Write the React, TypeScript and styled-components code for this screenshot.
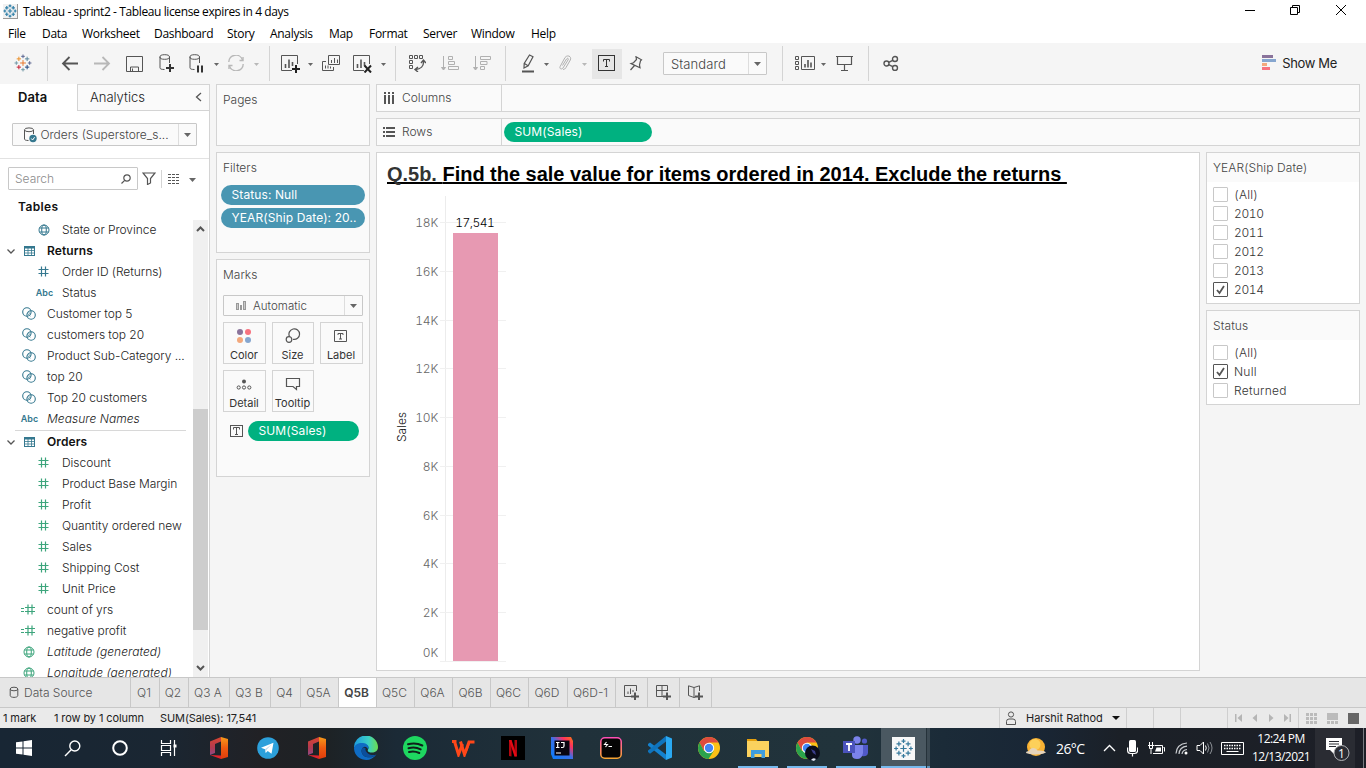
import React from "react";
import styled, { createGlobalStyle } from "styled-components";

const book = `Inter, "Open Sans", sans-serif`;
const segoe = `"Open Sans", "Noto Sans", sans-serif`;
const line = "#d4d4d4";
const ink = "#444";

const GlobalStyle = createGlobalStyle`
  * { box-sizing: border-box; }
  body { margin: 0; overflow: hidden; }
  svg { display: block; flex: none; }
`;

const Screen = styled.div`
  width: 1366px;
  height: 768px;
  display: flex;
  flex-direction: column;
  background: #f5f5f5;
  font: 300 12px ${book};
  color: #222;
  overflow: hidden;
  white-space: nowrap;
`;

/* ---------- window chrome ---------- */
const TitleBar = styled.header`
  height: 24px;
  background: #fff;
  display: flex;
  align-items: center;
  padding: 0 2px 1px 3px;
  font: 12px ${segoe};
  letter-spacing: -0.39px;
  color: #000;
`;
const AppBadge = styled.div`
  width: 15px;
  height: 15px;
  margin: 0 5px 1px 0;
  background: #f1f1f1;
  border-right: 1px solid #999;
  border-bottom: 1px solid #999;
`;
const WindowButtons = styled.div`
  display: flex;
  margin: -3px 0 0 auto;
`;
const WindowButton = styled.div`
  width: 46px;
  display: flex;
  justify-content: center;
  align-items: center;
`;
const MenuBar = styled.nav`
  height: 19px;
  background: #fff;
  display: flex;
  align-items: center;
  padding-left: 8px;
  font: 12px ${segoe};
  color: #000;
`;
const MenuItem = styled.span<{ $w: number }>`
  width: ${(p) => p.$w}px;
  letter-spacing: -0.3px;
`;

/* ---------- toolbar ---------- */
const Toolbar = styled.div`
  height: 41px;
  display: flex;
  align-items: center;
  background: #f5f5f5;
`;
const Slot = styled.div<{ $w: number; $ml?: number; $on?: boolean }>`
  width: ${(p) => p.$w}px;
  height: 30px;
  margin-left: ${(p) => p.$ml ?? 0}px;
  padding: 0 1px 1px 0;
  display: flex;
  flex: none;
  align-items: center;
  justify-content: center;
  background: ${(p) => (p.$on ? "#e6e6e6" : "transparent")};
`;
const CaretSlot = styled(Slot)`
  padding: 2px 0 0;
`;
const ToolSep = styled.div<{ $ml?: number }>`
  width: 1px;
  height: 35px;
  margin-left: ${(p) => p.$ml ?? 0}px;
  background: ${line};
`;
const Combo = styled.div<{ $w: number; $h: number; $ml?: number }>`
  width: ${(p) => p.$w}px;
  height: ${(p) => p.$h}px;
  margin-left: ${(p) => p.$ml ?? 0}px;
  display: flex;
  align-items: stretch;
  border: 1px solid #c8c8c8;
  border-radius: 1px;
  background: #fafafa;
  color: ${ink};
`;
const ComboText = styled.div<{ $pl: number; $ls?: number; $size?: number }>`
  flex: 1;
  display: flex;
  align-items: center;
  padding-left: ${(p) => p.$pl}px;
  letter-spacing: ${(p) => p.$ls ?? 0}px;
  font-size: ${(p) => p.$size ?? 12}px;
`;
const ComboArrow = styled.div`
  width: 18px;
  border-left: 1px solid #ddd;
  display: flex;
  align-items: center;
  justify-content: center;
`;
const ShowMe = styled.div`
  display: flex;
  align-items: center;
  gap: 6px;
  margin: 0 29px 0 auto;
  padding-bottom: 1px;
  font-size: 13px;
  letter-spacing: -0.35px;
  font-weight: 400;
`;

/* ---------- main ---------- */
const Main = styled.main`
  height: 593px;
  display: flex;
`;
const DataPane = styled.aside`
  width: 210px;
  background: #fff;
  border-right: 1px solid ${line};
  display: flex;
  flex-direction: column;
`;
const PaneTabs = styled.div`
  height: 27px;
  display: flex;
  font-size: 13px;
`;
const ActiveTab = styled.div`
  width: 77px;
  padding-left: 18px;
  font-weight: 600;
  color: #111;
  line-height: 26px;
  letter-spacing: 0.1px;
`;
const OtherTab = styled.div`
  flex: 1;
  display: flex;
  align-items: center;
  justify-content: space-between;
  padding: 0 7px 2px 12px;
  background: #fafafa;
  border: solid ${line};
  border-width: 1px 0 1px 1px;
`;
const SourceRow = styled.div`
  height: 48px;
  padding: 12px 0 0 12px;
  border-bottom: 1px solid #e2e2e2;
`;
const SearchRow = styled.div`
  height: 39px;
  display: flex;
  align-items: center;
  padding-left: 8px;
`;
const SearchBox = styled.div`
  width: 130px;
  height: 23px;
  border: 1px solid #c8c8c8;
  border-radius: 1px;
  display: flex;
  align-items: center;
  justify-content: space-between;
  padding: 0 6px;
  color: #8c8c8c;
`;
const TablesTitle = styled.div`
  height: 22px;
  padding: 1px 0 0 18px;
  font-weight: 600;
  color: #111;
  letter-spacing: 0.35px;
`;
const FieldArea = styled.div`
  flex: 1;
  min-height: 0;
  display: flex;
  overflow: hidden;
`;
const FieldList = styled.div`
  width: 193px;
  margin-top: -1px;
`;
const FieldRow = styled.div<{ $kind?: "head" | "gen" }>`
  height: 21px;
  display: flex;
  align-items: center;
  padding-bottom: 1px;
  color: ${(p) => (p.$kind === "head" ? "#111" : "#222")};
  font-weight: ${(p) => (p.$kind === "head" ? 600 : 300)};
  font-style: ${(p) => (p.$kind === "gen" ? "italic" : "normal")};
  letter-spacing: ${(p) => (p.$kind === "head" ? 0.1 : p.$kind === "gen" ? 0.04 : -0.05)}px;
`;
const FieldIcon = styled.div<{ $nested?: boolean }>`
  width: ${(p) => (p.$nested ? 37 : 37)}px;
  margin-left: ${(p) => (p.$nested ? 25 : 10)}px;
  padding-top: 1px;
  display: flex;
  justify-content: center;
`;
const Twisty = styled.div`
  width: 10px;
  margin-left: 6px;
  padding-top: 1px;
`;
const HeadIcon = styled.div`
  width: 31px;
  padding: 1px 0 0 8px;
`;
const Abc = styled.span`
  font: 600 9px ${book};
  letter-spacing: 0;
  padding-left: 2px;
  color: #35788f;
`;
const RowDivider = styled.div`
  height: 2px;
  margin: 0 7px 0 15px;
  border-bottom: 1px solid #d8d8d8;
`;
const ScrollTrack = styled.div`
  width: 15px;
  height: 458px;
  display: flex;
  flex-direction: column;
  align-items: center;
  padding-top: 4px;
  background: #f0f0f0;
`;
const ScrollThumb = styled.div`
  width: 15px;
  height: 221px;
  margin: 176px 0 34px;
  background: #cdcdcd;
`;

const CardColumn = styled.section`
  width: 154px;
  margin-left: 6px;
  display: flex;
  flex-direction: column;
  gap: 6px;
`;
const Card = styled.div<{ $h: number }>`
  height: ${(p) => p.$h}px;
  border: 1px solid ${line};
  background: #fafafa;
  padding: 0 4px;
`;
const CardTitle = styled.div<{ $h: number }>`
  height: ${(p) => p.$h}px;
  padding: 7px 0 0 2px;
  color: ${ink};
  line-height: 15px;
`;
const Pill = styled.div<{ $c: string; $w: number }>`
  width: ${(p) => p.$w}px;
  height: 20px;
  padding-left: 10.5px;
  margin-bottom: 3px;
  border-radius: 10px;
  background: ${(p) => p.$c};
  color: #fff;
  line-height: 20px;
  font-weight: 400;
  letter-spacing: 0.1px;
`;
const MarkGrid = styled.div`
  display: grid;
  grid-template-columns: 43px 42px 43px;
  grid-auto-rows: 42px;
  gap: 6px;
  padding: 6px 0 9px 2px;
`;
const MarkButton = styled.div`
  border: 1px solid ${line};
  display: flex;
  flex-direction: column;
  align-items: center;
  justify-content: space-between;
  padding: 5px 1px 1px 0;
  font-size: 11px;
  font-weight: 400;
  line-height: 14px;
  color: #333;
`;
const MarkPillRow = styled.div`
  display: flex;
  padding-left: 9px;
  gap: 5px;
`;
const MarkPillIcon = styled.div`
  height: 20px;
  display: flex;
  align-items: center;
`;

const Work = styled.section`
  width: 984px;
  margin-left: 6px;
  display: flex;
  flex-direction: column;
  gap: 6px;
`;
const Shelf = styled.div`
  height: 28px;
  display: flex;
  border: 1px solid ${line};
  background: #fafafa;
`;
const ShelfLabel = styled.div`
  width: 125px;
  border-right: 1px solid ${line};
  display: flex;
  align-items: center;
  gap: 7px;
  padding: 0 0 1px 6px;
  color: ${ink};
`;
const ShelfBody = styled.div`
  padding: 3px 2px;
`;
const WorkRow = styled.div`
  display: flex;
  gap: 6px;
`;
const Viz = styled.div`
  width: 824px;
  height: 519px;
  border: 1px solid ${line};
  background: #fff;
`;
const VizTitle = styled.h1`
  height: 42px;
  margin: 0;
  padding: 10px 0 0 10px;
  font: bold 20px "Liberation Sans", Arial, sans-serif;
  color: #000;
  white-space: pre;
  letter-spacing: -0.02px;
  text-decoration: underline;
  text-decoration-thickness: 2px;
  text-underline-offset: 1px;
  text-decoration-skip-ink: none;
`;
const Muted = styled.span`
  color: #333;
`;
const QuickFilters = styled.aside`
  width: 154px;
  display: flex;
  flex-direction: column;
  gap: 6px;
`;
const QuickFilter = styled.div<{ $h: number }>`
  height: ${(p) => p.$h}px;
  border: 1px solid ${line};
  background: #fff;
`;
const FilterHead = styled.div`
  height: 29px;
  margin-bottom: 3px;
  padding-left: 6px;
  line-height: 30px;
  background: #fafafa;
  color: ${ink};
  letter-spacing: 0.1px;
`;
const Check = styled.label<{ $num: boolean }>`
  height: 19px;
  display: flex;
  align-items: center;
  gap: 6px;
  padding-left: 6px;
  color: #333;
  letter-spacing: ${(p) => (p.$num ? -0.35 : 0.25)}px;
  font-feature-settings: "tnum";
`;
const Box = styled.span<{ $on?: boolean }>`
  width: 15px;
  height: 15px;
  border: 1px solid ${(p) => (p.$on ? "#555" : "#c8c8c8")};
  border-radius: 1px;
`;

/* ---------- sheet tabs and status ---------- */
const SheetTabs = styled.div`
  height: 31px;
  display: flex;
  border-top: 1px solid #c8c8c8;
  border-bottom: 1px solid #c8c8c8;
  background: #e6e6e6;
  color: #555;
`;
const SheetTab = styled.div<{ $w: number; $on?: boolean }>`
  width: ${(p) => p.$w}px;
  display: flex;
  align-items: center;
  justify-content: center;
  gap: 5px;
  padding-right: 2px;
  border-right: 1px solid #c8c8c8;
  background: ${(p) => (p.$on ? "#fff" : "transparent")};
  color: ${(p) => (p.$on ? "#444" : "inherit")};
  font-weight: ${(p) => (p.$on ? 600 : 300)};
`;
const SourceTab = styled(SheetTab)`
  justify-content: flex-start;
  padding-left: 9px;
`;
const StatusBar = styled.div`
  height: 20px;
  display: flex;
  align-items: center;
  background: #eaeaea;
  font-size: 11px;
  font-weight: 400;
  color: #222;
`;
const StatusText = styled.span<{ $w: number }>`
  width: ${(p) => p.$w}px;
  padding-left: 3px;
  letter-spacing: -0.1px;
`;
const StatusCell = styled.div<{ $w: number; $gap?: number }>`
  width: ${(p) => p.$w}px;
  height: 20px;
  display: flex;
  align-items: center;
  justify-content: center;
  gap: ${(p) => p.$gap ?? 0}px;
  border-left: 1px solid #cfcfcf;
`;
const UserCell = styled(StatusCell)`
  justify-content: flex-start;
  padding-left: 5px;
  margin-left: auto;
`;

/* ---------- taskbar ---------- */
const Taskbar = styled.footer`
  height: 40px;
  display: flex;
  background: linear-gradient(90deg, #182634 0, #1a2632 12%, #212125 19%, #1d2225 24%, #1b2a36 29%, #20313a 42%, #21333b 62%, #1b2b38 69%, #192635 76%, #1b2027 82%, #1d1f27 100%);
  color: #fff;
  font-family: ${segoe};
  font-weight: 400;
`;
const Task = styled.div<{ $w?: number; $ml?: number; $open?: boolean; $active?: boolean }>`
  width: ${(p) => p.$w ?? 49}px;
  margin-left: ${(p) => p.$ml ?? 0}px;
  height: 40px;
  display: flex;
  flex: none;
  align-items: center;
  justify-content: center;
  background-color: ${(p) => (p.$active ? "#4a5861" : "transparent")};
  box-shadow: ${(p) => (p.$active ? "inset 0 -2px #76b9ed" : "none")};
  background-image: ${(p) => (p.$open ? "linear-gradient(#76b9ed, #76b9ed)" : "none")};
  background-size: 40px 2px;
  background-position: center bottom;
  background-repeat: no-repeat;
`;
const Stack = styled.div`
  width: 4px;
  border-left: 1px solid #25323a;
  background: #3c4a53;
  box-shadow: inset 0 -2px #5e93ba;
`;
const Weather = styled.span`
  width: 44px;
  padding-left: 5px;
  line-height: 41px;
  font-size: 14px;
  letter-spacing: -0.6px;
`;
const Clock = styled.div`
  width: 66px;
  padding-top: 2px;
  padding-right: 2px;
  font-size: 12px;
  line-height: 18px;
  letter-spacing: -0.55px;
  text-align: center;
`;
const Notify = styled.div`
  width: 40px;
  padding-left: 6px;
  display: flex;
  align-items: center;
  justify-content: center;
  background: #2a2c33;
`;
const DesktopEdge = styled.div`
  width: 1px;
  height: 40px;
  margin-left: 8px;
  background: #777b80;
`;

/* ---------- icons ---------- */
type SvgProps = { w: number; h: number; c?: string; sw?: number; children: React.ReactNode };
const Svg = ({ w, h, c = "#555", sw = 1, children }: SvgProps) => (
  <svg width={w} height={h} viewBox={`0 0 ${w} ${h}`} fill="none" stroke={c} strokeWidth={sw}>{children}</svg>
);
const Caret = ({ c = "#666", w = 5 }: { c?: string; w?: number }) => (
  <svg width={w} height={w === 5 ? 3 : 4} viewBox="0 0 8 4.8" preserveAspectRatio="none"><path d="M0 0h8L4 4.8z" fill={c} /></svg>
);

const marks: [number, number, number][] = [
  [10, 10, 3.2], [10, 2.6, 2], [10, 17.4, 2], [2.6, 10, 2], [17.4, 10, 2],
  [5.4, 5.4, 2.4], [14.6, 5.4, 2.4], [5.4, 14.6, 2.4], [14.6, 14.6, 2.4],
];
const colours = ["#e8762c", "#5b6591", "#7199a6", "#7199a6", "#5b6591", "#eb912c", "#5b879b", "#c72035", "#1f457e"];
const TableauMark = ({ size, mono, sw = 1.1 }: { size: number; mono?: string; sw?: number }) => (
  <svg width={size} height={size} viewBox="0 0 20 20" fill="none" strokeWidth={sw}>
    {marks.map(([x, y, r], i) => (
      <path key={i} stroke={mono ?? colours[i]} d={`M${x - r} ${y}h${r * 2}M${x} ${y - r}v${r * 2}`} />
    ))}
  </svg>
);
const Cylinder = ({ kind }: { kind: "plus" | "pause" }) => (
  <Svg w={18} h={20}>
    <path d="M7.500 16.500c-3 0-4.500-.5-4.500-1.700V4M12.500 4v6" />
    <ellipse cx="7.700" cy="4" rx="4.800" ry="2.300" />
    {kind === "plus" ? <path d="M9 15h8M13 11v8" stroke="#333" strokeWidth="2" /> : <path d="M11 12.500v7M15 12.500v7" stroke="#333" strokeWidth="2" />}
  </Svg>
);
const Sheet = ({ kind }: { kind: "plus" | "x" }) => (
  <Svg w={20} h={19}>
    <path d="M17.500 10V1.500h-16v15H12" />
    <path d="M5.500 10v4M9 5.500v8.500M12.500 8v4" strokeWidth="1.600" />
    {kind === "plus" ? <path d="M12 15h8M16 11v8" stroke="#222" strokeWidth="2" /> : <path d="M12.500 11.500l6.500 7M19 11.500l-6.500 7" stroke="#222" strokeWidth="2" />}
  </Svg>
);
const SortIcon = ({ up }: { up?: boolean }) => (
  <Svg w={18} h={16} c="#b0b0b0">
    <path d="M2.500 1v12M.500 12.500l2 2.500 2-2.500z" fill="#b0b0b0" />
    {up ? <path d="M7.500 1.500h4v3h-4zM7.500 6.500h6v3h-6zM7.500 11.500h10v3h-10z" /> : <path d="M7.500 1.500h10v3h-10zM7.500 6.500h6.500v3H7.500zM7.500 11.500h4v3h-4z" />}
  </Svg>
);
const TextIcon = ({ w, h, c = "#555" }: { w: number; h: number; c?: string }) => (
  <Svg w={w} h={h} c={c}>
    <rect x=".5" y=".5" width={w - 1} height={h - 1} />
    <path d={`M${w / 2 - 3} ${h / 2 - 1.500}v-2h6v2M${w / 2} ${h / 2 - 3.500}v7M${w / 2 - 1.500} ${h / 2 + 3.500}h3`} />
  </Svg>
);
const Globe = ({ c }: { c: string }) => (
  <Svg w={12} h={12} c={c}><circle cx="6" cy="6" r="5" /><ellipse cx="6" cy="6" rx="2.300" ry="5" /><path d="M1.500 4h9M1.500 8h9" /></Svg>
);
const Hash = ({ c, calc }: { c: string; calc?: boolean }) =>
  calc ? (
    <Svg w={15} h={11} c={c} sw={1.2}><path d="M0 4.500h3M0 7.500h3M4 3.500h10M4 7.500h10M7 .500v10M11 .500v10" /></Svg>
  ) : (
    <Svg w={11} h={11} c={c} sw={1.2}><path d="M.500 3.500h10M.500 7.500h10M3.500 .500v10M7.500 .500v10" /></Svg>
  );
const SetIcon = () => (
  <Svg w={14} h={13} c="#35788f" sw={1.1}><circle cx="4.900" cy="5" r="4.200" /><circle cx="9.100" cy="8" r="4.200" /><path d="M5.200 6l3.200 3.200M6.200 4.800l2.800 2.800" strokeWidth=".8" /></Svg>
);
const TableIcon = () => (
  <Svg w={11} h={10} c="#35788f"><rect x=".5" y=".5" width="10" height="9" /><path d="M0 1.500h11" strokeWidth="2" /><path d="M0 4.500h11M0 7h11M4 1v9M7.500 1v9" strokeWidth=".8" /></Svg>
);
const Chevron = ({ d, w, h, c = "#555", sw = 1.3 }: { d: string; w: number; h: number; c?: string; sw?: number }) => (
  <Svg w={w} h={h} c={c} sw={sw}><path d={d} /></Svg>
);

/* ---------- data ---------- */
const blue = "#35788f";
const green = "#3da57c";
type Field = [string, string, number?, string?];
const dimensions: Field[] = [
  ["State or Province", "globe", 1], ["Returns", "table"], ["Order ID (Returns)", "hash", 1, blue],
  ["Status", "abc", 1], ["Customer top 5", "set"], ["customers top 20", "set"],
  ["Product Sub-Category ...", "set"], ["top 20", "set"], ["Top 20 customers", "set"], ["Measure Names", "abc"],
];
const measures: Field[] = [
  ["Orders", "table"], ["Discount", "hash", 1], ["Product Base Margin", "hash", 1], ["Profit", "hash", 1],
  ["Quantity ordered new", "hash", 1], ["Sales", "hash", 1], ["Shipping Cost", "hash", 1], ["Unit Price", "hash", 1],
  ["count of yrs", "calc"], ["negative profit", "calc"], ["Latitude (generated)", "globe"], ["Longitude (generated)", "globe"],
];
const FieldItem = ({ f }: { f: Field }) => {
  const [name, icon, nested, c] = f;
  const gen = /generated|Measure/.test(name);
  if (icon === "table")
    return (
      <FieldRow $kind="head">
        <Twisty><Chevron w={10} h={8} d="M1.500 2.500l3.500 3.500L8.500 2.500" /></Twisty>
        <HeadIcon><TableIcon /></HeadIcon>
        {name}
      </FieldRow>
    );
  return (
    <FieldRow $kind={gen ? "gen" : undefined}>
      <FieldIcon $nested={!!nested}>
        {icon === "globe" && <Globe c={nested ? blue : green} />}
        {icon === "hash" && <Hash c={c ?? green} />}
        {icon === "calc" && <Hash c={green} calc />}
        {icon === "set" && <SetIcon />}
        {icon === "abc" && <Abc>Abc</Abc>}
      </FieldIcon>
      {name}
    </FieldRow>
  );
};

const menu: [string, number][] = [
  ["File", 34], ["Data", 40], ["Worksheet", 72], ["Dashboard", 73], ["Story", 43], ["Analysis", 59],
  ["Map", 40], ["Format", 54], ["Server", 48], ["Window", 60], ["Help", 40],
];
const sheets: [string, number][] = [
  ["Q1", 29], ["Q2", 29], ["Q3 A", 41], ["Q3 B", 41], ["Q4", 30], ["Q5A", 38], ["Q5B", 38], ["Q5C", 38],
  ["Q6A", 38], ["Q6B", 38], ["Q6C", 38], ["Q6D", 39], ["Q6D-1", 48],
];

const Filter = ({ title, h, items, on }: { title: string; h: number; items: string[]; on: string }) => (
  <QuickFilter $h={h}>
    <FilterHead>{title}</FilterHead>
    {items.map((i) => (
      <Check key={i} $num={/^\d/.test(i)}>
        <Box $on={i === on}>{i === on && <Svg w={13} h={13} sw={1.8}><path d="M3 7l2.500 3L10 3" /></Svg>}</Box>
        {i}
      </Check>
    ))}
  </QuickFilter>
);

const ChartSvg = styled.svg`
  font: 300 12px ${book};
  font-feature-settings: "tnum";
`;
const ticks = [18, 16, 14, 12, 10, 8, 6, 4, 2, 0];
const Chart = () => (
  <ChartSvg width="140" height="475" viewBox="377 195 140 475">
    <path d="M445.500 196V661" stroke="#ececec" />
    {ticks.map((t) => {
      const y = Math.round(661 - t * 24.38) + 0.5;
      return (
        <g key={t}>
          <path d={`M440 ${y}h66`} stroke="#f0f0f0" />
          <text x="438" y={t ? y + 4.500 : 657} textAnchor="end" fill="#666" letterSpacing="-.2">{t}K</text>
        </g>
      );
    })}
    <rect x="453" y="233" width="45" height="428" fill="#e799b2" />
    <text x="475" y="227" textAnchor="middle" fill="#000" textLength="39.500">17,541</text>
    <text x="0" y="0" transform="translate(406 427) rotate(-90)" textAnchor="middle" fill="#111">Sales</text>
  </ChartSvg>
);

const OfficeIcon = () => (
  <svg width="20" height="24" viewBox="0 0 20 24">
    <defs>
      <linearGradient id="of" x2="0" y2="1"><stop offset="0" stopColor="#d8442f" /><stop offset=".6" stopColor="#b23a52" /><stop offset="1" stopColor="#8e4a86" /></linearGradient>
      <linearGradient id="og" x2="0" y2="1"><stop offset="0" stopColor="#f79a1a" /><stop offset=".5" stopColor="#ee5a10" /><stop offset="1" stopColor="#e03c0c" /></linearGradient>
    </defs>
    <path d="M1 5.500L12 1v4.500L6 8v9l-5 2z" fill="url(#of)" />
    <path d="M12 1l7 2v18l-7 2z" fill="url(#og)" />
    <path d="M1 19l11 .5V23z" fill="#e0232e" />
  </svg>
);
const ChromeIcon = ({ avatar }: { avatar?: boolean }) => (
  <svg width={26} height={26} viewBox="0 0 26 26">
    <circle cx="13" cy="13" r="11" fill="#fbc116" />
    <path d="M3.500 7.500A11 11 0 0 1 22.500 7.500H13L8 16z" fill="#dd4b3e" />
    <path d="M3.500 7.500A11 11 0 0 0 12.500 24L17.800 15.800 8 16z" fill="#2ba24c" />
    <circle cx="13" cy="13" r="5.200" fill="#fff" /><circle cx="13" cy="13" r="4.200" fill="#4285f4" />
    {avatar && <g><circle cx="18.500" cy="18" r="7.500" fill="#0b0d1c" /><path d="M17 14l4 2 1 4-3-2z" fill="#3b3d8a" /><path d="M17 25q2-3 5-1l-2 2z" fill="#dfe6f5" /></g>}
  </svg>
);

export default function App() {
  return (
    <Screen>
      <GlobalStyle />
      <TitleBar>
        <AppBadge><TableauMark size={14} mono="#2f7fa8" sw={1.7} /></AppBadge>
        Tableau - sprint2 - Tableau license expires in 4 days
        <WindowButtons>
          <WindowButton><Svg w={12} h={12} c="#000"><path d="M2 6.500h10" /></Svg></WindowButton>
          <WindowButton><Svg w={12} h={12} c="#000"><path d="M1.500 3.500h7v7h-7zM3.500 3.500v-2h7v7h-2" /></Svg></WindowButton>
          <WindowButton><Svg w={12} h={12} c="#000"><path d="M1 1l10 10M11 1L1 11" /></Svg></WindowButton>
        </WindowButtons>
      </TitleBar>
      <MenuBar>{menu.map(([m, w]) => <MenuItem key={m} $w={w}>{m}</MenuItem>)}</MenuBar>

      <Toolbar>
        <Slot $w={47}><TableauMark size={18} /></Slot>
        <ToolSep />
        <Slot $w={32} $ml={6}><Svg w={18} h={16} sw={1.8}><path d="M17 8.500H2M8.500 2L2 8.500l6.500 6.500" /></Svg></Slot>
        <Slot $w={32}><Svg w={18} h={16} c="#b8b8b8" sw={1.8}><path d="M1 8.500h15M9.500 2L16 8.500l-6.500 6.500" /></Svg></Slot>
        <Slot $w={33}><Svg w={17} h={17}><path d="M.500 1.500h16v15H.500zM4.500 16.500V12h8v4.500M6.500 16v-2.500" /></Svg></Slot>
        <Slot $w={31}><Cylinder kind="plus" /></Slot>
        <Slot $w={28}><Cylinder kind="pause" /></Slot>
        <CaretSlot $w={12}><Caret /></CaretSlot>
        <Slot $w={28}><Svg w={18} h={16} c="#b8b8b8" sw={1.400}><path d="M1.800 7A7 6.800 0 0 1 15.500 5M16.200 9A7 6.800 0 0 1 2.500 11" /><path d="M12.500 5.500h3.500V2M5.500 10.500H2V14" /></Svg></Slot>
        <CaretSlot $w={12}><Caret c="#b8b8b8" /></CaretSlot>
        <ToolSep $ml={7} />
        <Slot $w={30} $ml={5}><Sheet kind="plus" /></Slot>
        <CaretSlot $w={10}><Caret /></CaretSlot>
        <Slot $w={31} $ml={1}><Svg w={18} h={17}><path d="M6.500 .500h11v9h-11zM4 6.500H.500v9h11V12M9.500 8V5M12.500 8V3M15.500 8V4.500M3.500 13.500v-3M6 13.500v-3M8.500 13.500v-2" /></Svg></Slot>
        <Slot $w={31}><Sheet kind="x" /></Slot>
        <CaretSlot $w={10}><Caret /></CaretSlot>
        <ToolSep $ml={7} />
        <Slot $w={32} $ml={5}><Svg w={18} h={18}><path d="M1.500 1.500h3v3h-3zM6.500 1.500h3v3h-3zM11.500 1.500h3v3h-3zM1.500 6.500h3v3h-3zM1.500 11.500h3v3h-3z" /><path d="M15.500 7c.500 5-3 8-8 8.500M13 9l2.500-3L18 9M10 13l-3 2.500 3 2.500" strokeWidth="1.400" /></Svg></Slot>
        <Slot $w={32} $ml={1}><SortIcon up /></Slot>
        <Slot $w={32}><SortIcon /></Slot>
        <ToolSep $ml={7} />
        <Slot $w={28} $ml={8}><Svg w={14} h={19}><path d="M1 17.500h12" strokeWidth="2" /><path d="M8.500 1l3.500 1.800-4.800 9-4.200 2.200.200-4.500zM3.500 9.500l3.500 2.200" strokeWidth="1.200" /></Svg></Slot>
        <CaretSlot $w={8}><Caret /></CaretSlot>
        <Slot $w={31}><Svg w={14} h={16} c="#b0b0b0"><path d="M4.500 10.500l4-6.500c1-1.500 2.500-.500 1.500 1l-5 8c-1.500 2-4 .500-2.800-1.600L7 2.500C9.500-.800 14 1.500 12.300 5L8 12.500q-1 2-3 2" /></Svg></Slot>
        <CaretSlot $w={6}><Caret c="#b8b8b8" /></CaretSlot>
        <Slot $w={30} $ml={5} $on><TextIcon w={17} h={16} c="#333" /></Slot>
        <Slot $w={28}><Svg w={14} h={15} sw={1.200}><path d="M7 .800l5.500 3-1 1-1 4 .500 3L2 7.500l2.500-.800 3-3.200zM5.500 9.500L1.500 14" /></Svg></Slot>
        <Combo $w={104} $h={23} $ml={13}><ComboText $pl={7} $size={13} $ls={0.1}>Standard</ComboText><ComboArrow><Caret w={7} /></ComboArrow></Combo>
        <ToolSep $ml={15} />
        <Slot $w={24} $ml={10}><Svg w={20} h={15}><path d="M.500 .500h3v3h-3zM.500 5.500h3v3h-3zM.500 10.500h3v3h-3zM6.500 .500h13v13h-13z" /><path d="M10 8v3.500M13 4v7.500M16 6.500v5" strokeWidth="1.600" /></Svg></Slot>
        <CaretSlot $w={12}><Caret /></CaretSlot>
        <Slot $w={32}><Svg w={17} h={16}><path d="M0 1.500h17M1.500 1.500v8h14v-8M8.500 9.500v5.500M5 15.500h7" strokeWidth="1.200" /></Svg></Slot>
        <ToolSep $ml={7} />
        <Slot $w={32} $ml={6}><Svg w={16} h={16} sw={1.400}><circle cx="3.500" cy="8.500" r="2.500" /><circle cx="12" cy="4" r="2.500" /><circle cx="12" cy="13" r="2.500" /><path d="M5.700 7.300l4-2M5.700 9.700l4 2" /></Svg></Slot>
        <ShowMe>
          <Svg w={14} h={16} c="none"><path fill="#8a739b" d="M0 0h11v3H0z" /><path fill="#86a6cf" d="M0 4h14v3H0z" /><path fill="#f3a87c" d="M0 8h5v3H0z" /><path fill="#f7727f" d="M0 12h8v3H0z" /></Svg>
          Show Me
        </ShowMe>
      </Toolbar>

      <Main>
        <DataPane>
          <PaneTabs>
            <ActiveTab>Data</ActiveTab>
            <OtherTab>Analytics<Chevron w={7} h={10} d="M6 1L1.500 5 6 9" /></OtherTab>
          </PaneTabs>
          <SourceRow>
            <Combo $w={185} $h={23}>
              <ComboText $pl={10}>
                <Svg w={14} h={16}><path d="M5.500 13.500c-3 0-4-.700-4-1.500V3M10.500 3v4" /><ellipse cx="6" cy="2.800" rx="4.500" ry="1.900" /><circle cx="10" cy="11.500" r="3.700" fill="#35788f" stroke="none" /><path d="M8.300 11.500l1.300 1.500 2-2.800" stroke="#fff" /></Svg>
                &nbsp;Orders (Superstore_s...
              </ComboText>
              <ComboArrow><Caret w={7} /></ComboArrow>
            </Combo>
          </SourceRow>
          <SearchRow>
            <SearchBox>Search<Svg w={10} h={10} sw={1.200}><circle cx="6" cy="4" r="3.200" /><path d="M3.700 6.300L.500 9.500" /></Svg></SearchBox>
            <Slot $w={22}><Svg w={14} h={13} sw={1.200}><path d="M1 1h12L8.500 6.500v4.500l-3 1.500v-6z" /></Svg></Slot>
            <Svg w={24} h={18}><path d="M1.500 0v18" stroke={line} /><path d="M8 4.500h12M8 7.500h12M8 10.500h12M8 13.500h12" strokeDasharray="3 1" /></Svg>
            <CaretSlot $w={17}><Caret w={7} /></CaretSlot>
          </SearchRow>
          <TablesTitle>Tables</TablesTitle>
          <FieldArea>
            <FieldList>
              {dimensions.map((f) => <FieldItem key={f[0]} f={f} />)}
              <RowDivider />
              {measures.map((f) => <FieldItem key={f[0]} f={f} />)}
            </FieldList>
            <ScrollTrack>
              <Chevron w={9} h={9} d="M1 7l3.500-3.500L8 7" sw={2} />
              <ScrollThumb />
              <Chevron w={9} h={9} d="M1 2l3.500 3.500L8 2" sw={2} />
            </ScrollTrack>
          </FieldArea>
        </DataPane>

        <CardColumn>
          <Card $h={62}><CardTitle $h={30}>Pages</CardTitle></Card>
          <Card $h={101}>
            <CardTitle $h={32}>Filters</CardTitle>
            <Pill $c="#4996b2" $w={144}>Status: Null</Pill>
            <Pill $c="#4996b2" $w={144}>YEAR(Ship Date): 20..</Pill>
          </Card>
          <Card $h={218}>
            <CardTitle $h={35}>Marks</CardTitle>
            <Combo $w={140} $h={21} $ml={2}>
              <ComboText $pl={12} $size={11.5} $ls={0.05}>
                <Svg w={17} h={12} c="none"><path fill="#999" d="M0 3h3v7H0zM4 5h2v5H4zM7 1h3v9H7z" /><path fill="#fafafa" d="M1 4h1v5H1zM8 2h1v7H8z" opacity=".5" /></Svg>
                Automatic
              </ComboText>
              <ComboArrow><Caret w={7} /></ComboArrow>
            </Combo>
            <MarkGrid>
              <MarkButton><Svg w={16} h={16} c="none"><circle cx="4" cy="4" r="3" fill="#8a739b" /><circle cx="12" cy="4" r="3" fill="#f7727f" /><circle cx="4" cy="12" r="3" fill="#f3a87c" /><circle cx="12" cy="12" r="3" fill="#86a6cf" /></Svg>Color</MarkButton>
              <MarkButton><Svg w={16} h={16} sw={1.200}><path d="M4.500 8.500A5.300 5.300 0 1 1 8 11.300" /><circle cx="4" cy="11.500" r="2.800" /></Svg>Size</MarkButton>
              <MarkButton><Svg w={14} h={16}><path d="M.500 2.500h12v11H.500zM4 7V5.500h5V7M6.500 5.500v5.500M5 11h3" /></Svg>Label</MarkButton>
              <MarkButton><Svg w={16} h={16}><circle cx="8" cy="5.500" r="2" fill="#555" stroke="none" /><circle cx="2.700" cy="11.500" r="1.600" /><circle cx="8" cy="11.500" r="1.600" /><circle cx="13.300" cy="11.500" r="1.600" /></Svg>Detail</MarkButton>
              <MarkButton><Svg w={16} h={16} sw={1.200}><path d="M1.500 2.500h13v8h-3v3l-3.500-3H1.500z" /></Svg>Tooltip</MarkButton>
            </MarkGrid>
            <MarkPillRow>
              <MarkPillIcon><TextIcon w={13} h={12} /></MarkPillIcon>
              <Pill $c="#00b180" $w={111}>SUM(Sales)</Pill>
            </MarkPillRow>
          </Card>
        </CardColumn>

        <Work>
          <Shelf>
            <ShelfLabel><Svg w={12} h={12} sw={2}><path d="M2 0v2M6 0v2M10 0v2M2 3v9M6 3v9M10 3v9" /></Svg>Columns</ShelfLabel>
            <ShelfBody />
          </Shelf>
          <Shelf>
            <ShelfLabel><Svg w={12} h={12} sw={2}><path d="M0 2h2M0 6h2M0 10h2M3 2h9M3 6h9M3 10h9" /></Svg>Rows</ShelfLabel>
            <ShelfBody><Pill $c="#00b180" $w={148}>SUM(Sales)</Pill></ShelfBody>
          </Shelf>
          <WorkRow>
            <Viz>
              <VizTitle><Muted>Q.5b. </Muted>Find the sale value for items ordered in 2014. Exclude the returns </VizTitle>
              <Chart />
            </Viz>
            <QuickFilters>
              <Filter title="YEAR(Ship Date)" h={152} items={["(All)", "2010", "2011", "2012", "2013", "2014"]} on="2014" />
              <Filter title="Status" h={95} items={["(All)", "Null", "Returned"]} on="Null" />
            </QuickFilters>
          </WorkRow>
        </Work>
      </Main>

      <SheetTabs>
        <SourceTab $w={131}><Svg w={10} h={13}><ellipse cx="5" cy="3" rx="3.800" ry="1.800" /><path d="M1.200 3v6.500c0 2.500 7.600 2.500 7.600 0V3" /></Svg>Data Source</SourceTab>
        {sheets.map(([s, w]) => <SheetTab key={s} $w={w} $on={s === "Q5B"}>{s}</SheetTab>)}
        <SheetTab $w={32}><Svg w={16} h={15}><path d="M13.500 6V.500H1.500v11H8M5 9V6.500M7.500 9V3.500M10 7V5" /><path d="M8 11.500h8M12 7.500v8" strokeWidth="2" /></Svg></SheetTab>
        <SheetTab $w={32}><Svg w={16} h={15}><path d="M12.500 6V.500H1.500v11H8M1.500 5.500h11M7 .500v11" /><path d="M8 11.500h8M12 7.500v8" strokeWidth="2" /></Svg></SheetTab>
        <SheetTab $w={32}><Svg w={16} h={15}><path d="M12.500 6V.800L7 2.500 1.500 .800v9.700L7 12.500V2.500M7 12.500l1.500-.5" /><path d="M8 11.500h8M12 7.500v8" strokeWidth="2" /></Svg></SheetTab>
      </SheetTabs>
      <StatusBar>
        <StatusText $w={51}>1 mark</StatusText>
        <StatusText $w={106}>1 row by 1 column</StatusText>
        <StatusText $w={120}>SUM(Sales): 17,541</StatusText>
        <UserCell $w={127} $gap={9}>
          <Svg w={12} h={15}><circle cx="6" cy="3.500" r="2.600" /><path d="M1.500 13.500v-3q0-2.500 2.500-2.500h4q2.500 0 2.500 2.500v3z" /></Svg>
          Harshit Rathod
          <Caret w={8} c="#111" />
        </UserCell>
        <StatusCell $w={27} /><StatusCell $w={27} /><StatusCell $w={47} />
        <StatusCell $w={71}>
          <Svg w={56} h={8} c="none"><path fill="#b5b5b5" d="M0 0h1.500v8H0zM7 0v8L2.500 4zM22 0v8l-4.500-4zM34 0v8l4.500-4zM49 0v8l4.500-4zM54.500 0H56v8h-1.500z" /></Svg>
        </StatusCell>
        <StatusCell $w={68} $gap={10}>
          <Svg w={11} h={11} c="none"><path fill="#bbb" d="M0 0h3v3H0zM4 0h3v3H4zM8 0h3v3H8zM0 4h3v3H0zM4 4h3v3H4zM8 4h3v3H8zM0 8h3v3H0zM4 8h3v3H4zM8 8h3v3H8z" /></Svg>
          <Svg w={11} h={11} c="none"><path fill="#bbb" d="M0 0h11v7H0zM0 8h3v3H0zM4 8h3v3H4zM8 8h3v3H8z" /></Svg>
          <Svg w={11} h={11} c="none"><path fill="#666" d="M0 0h11v11H0z" /></Svg>
        </StatusCell>
      </StatusBar>

      <Taskbar>
        <Task $w={48}><Svg w={16} h={16} c="none"><path fill="#fff" d="M0 2.300L6.500 1.400v6.100H0zM7.500 1.200L16 0v7.500H7.500zM0 8.500h6.500v6.100L0 13.700zM7.500 8.500H16V16l-8.500-1.200z" /></Svg></Task>
        <Task $w={48}><Svg w={17} h={17} c="#fff" sw={1.400}><circle cx="10.800" cy="6" r="5" /><path d="M7.200 9.800L1 16" /></Svg></Task>
        <Task $w={48}><Svg w={16} h={16} c="#fff" sw={2}><circle cx="8" cy="8" r="6.800" /></Svg></Task>
        <Task $w={48}><Svg w={17} h={16} c="#fff" sw={1.200}><path d="M1.500 0v3.500h9V0M1.500 16v-3.500h9V16M1.500 5.500h9v5h-9zM14.500 0v16" /><path d="M13.500 4.500h3v3h-3z" fill="#fff" stroke="none" /></Svg></Task>
        <Task $ml={2}><OfficeIcon /></Task>
        <Task><Svg w={22} h={22} c="none"><circle cx="11" cy="11" r="10.800" fill="#2ca0db" /><path fill="#fff" d="M4 10.800l12.500-5-2 11-3.800-2.800-2 1.900-.700-3.600z" /><path fill="#b9d9ec" d="M8 12.300L14.500 7.500l-5 5.300-.8 3z" /></Svg></Task>
        <Task><OfficeIcon /></Task>
        <Task>
          <svg width="24" height="24" viewBox="0 0 24 24">
            <defs><linearGradient id="ed" x1="0" x2="1"><stop offset="0" stopColor="#1d9be0" /><stop offset=".6" stopColor="#3bd0c5" /><stop offset="1" stopColor="#6cdc4e" /></linearGradient></defs>
            <path d="M0 12A12 12 0 0 1 24 11c0 4-3 5.500-6 5.500s-5-1-4-3c1.500-2.500-.5-5.500-4.500-5.500C5 8 1 10 0 12z" fill="url(#ed)" />
            <path d="M0 12c1-4 5-5.500 9-5 5 .6 6.500 4 5 6.500-1-3-3.500-3.500-5-2-3 3-1 8.500 3.500 9.500 4 .9 7 0 10-2.500C19 23 14 25 9 23.500 3 22 0 17 0 12z" fill="#0f6cc4" />
            <path d="M9 11.500c-3 3-1 8.500 3.500 9.500 4 .9 7 0 10-2.500-3 1-6 .8-8.500-1-2-1.500-3-3.500-2.500-5.500z" fill="#0b4f9c" />
          </svg>
        </Task>
        <Task><Svg w={24} h={24} c="#10201a" sw={2}><circle cx="12" cy="12" r="12" fill="#1ed760" stroke="none" /><path d="M5 8.300c5-1.500 10-1 14.300 1.200M5.500 12.300c4.500-1.300 8.500-.800 12.200 1.100M6 16c4-1 7-.600 10.300 1" strokeLinecap="round" /></Svg></Task>
        <Task>
          <Svg w={23} h={17} c="#ff4719" sw={3}><path d="M0 1.500h4.500M2.500 1.500L6.500 14.500 10.500 4" /><path d="M8.500 1.500L12.500 14.500 17 2h5.500" /><path d="M17.500 2L13.500 13" strokeWidth="2" /></Svg>
        </Task>
        <Task><Svg w={24} h={24} c="none"><path fill="#000" d="M0 0h24v24H0z" /><path fill="#b1060f" d="M8 4h2.500v16.500L8 20zM13.500 4H16v16l-2.500.5z" /><path fill="#e50914" d="M8 4h2.500L16 20.500h-2.500z" /></Svg></Task>
        <Task>
          <svg width="22" height="22" viewBox="0 0 22 22">
            <defs><linearGradient id="ij" x1="0" x2="1" y1="1" y2="0"><stop offset="0" stopColor="#087cfa" /><stop offset=".5" stopColor="#3a6fe8" /><stop offset=".75" stopColor="#fe315d" /><stop offset="1" stopColor="#f97a12" /></linearGradient></defs>
            <path d="M0 0h20l2 4v18H2l-2-5z" fill="url(#ij)" /><path d="M3.500 3.500h15v15h-15z" fill="#080510" />
            <path d="M5 5.500h3.500M6.700 5.500v5M5 10.500h3.500M10 5.500h3v3.500q0 1.500-1.500 1.500H10M5 16h5" stroke="#fff" strokeWidth="1.200" fill="none" />
          </svg>
        </Task>
        <Task>
          <svg width="22" height="22" viewBox="0 0 22 22">
            <defs><linearGradient id="tm" x2="0" y2="1"><stop offset="0" stopColor="#ff4fb5" /><stop offset="1" stopColor="#f7a532" /></linearGradient></defs>
            <rect x=".8" y=".8" width="20.400" height="20.400" rx="4" fill="#050505" stroke="url(#tm)" strokeWidth="1.600" />
            <path d="M6.500 5L4.500 7.500h3L5.500 10M8.500 9.500h3.500" stroke="#fff" fill="none" strokeWidth="1.100" />
          </svg>
        </Task>
        <Task><Svg w={24} h={24} c="none"><path fill="#1482cf" d="M0 8l2-1.500L18 18.500V24L0 9.500z" /><path fill="#0f74bd" d="M0 16l2 1.800L18 5.500V0L0 14.500z" /><path fill="#2aa9f2" d="M18 0l6 2.500v19L18 24z" /></Svg></Task>
        <Task><ChromeIcon /></Task>
        <Task $open><Svg w={22} h={19} c="none"><path fill="#e5a00d" d="M0 0h9l1.500 2H0z" /><path fill="#fbd25e" d="M0 2h22v16H0z" /><path fill="#3f9ede" d="M4 11h14v8h-3.500v-4h-7v4H4z" /></Svg></Task>
        <Task $open><ChromeIcon avatar /></Task>
        <Task $open>
          <Svg w={26} h={24} c="none"><circle cx="14" cy="4" r="3.700" fill="#7b83eb" /><circle cx="21.500" cy="5" r="2.600" fill="#5059c9" /><path fill="#5059c9" d="M17 9h8v8q-1 4-6 3z" /><path fill="#7b83eb" d="M9 9h11v8q-1 6-6 6t-5-4z" /><path fill="#4b53bc" d="M0 5h12v12H0z" /><path d="M3 8h6M6 8v7" stroke="#fff" strokeWidth="1.800" /></Svg>
        </Task>
        <Task $w={45} $ml={1} $active><Svg w={23} h={23} c="none"><path fill="#f7f7f7" d="M0 0h23v23H0z" /><g transform="translate(1.500 1.500)"><TableauMark size={20} mono="#35789b" sw={1.200} /></g></Svg></Task>
        <Stack />
        <Task $w={30} $ml={91}>
          <Svg w={22} h={20} c="none"><circle cx="11" cy="9" r="9" fill="#f9b233" /><circle cx="10" cy="6.500" r="5.500" fill="#fdd05a" /><path fill="#e4d3bb" d="M1 15q0-2 3-2 1-3 4.500-3 3 0 4 2.500 7-.5 8.500 2-3 2-8 1.700-8 .8-12-1.200z" /></Svg>
        </Task>
        <Weather>26°C</Weather>
        <Task $w={24} $ml={2}><Svg w={13} h={8} c="#fff" sw={1.300}><path d="M1 7l5.500-5.500L12 7" /></Svg></Task>
        <Task $w={22}><Svg w={11} h={17} c="#fff" sw={1.200}><rect x="2" y="0" width="7" height="12" rx="1.500" fill="#fff" stroke="none" /><path d="M.600 7.500v3q0 3 3 3h4q3 0 3-3v-3M5.500 14v2.500" /></Svg></Task>
        <Task $w={26}><Svg w={17} h={13} c="#fff"><path d="M6.500 3.500h8v8H5M15.500 5.500h1v4" /><path d="M8.500 5.500h4.500v4H7z" fill="#fff" stroke="none" /><path d="M1.500 0v3M4.500 0v3M0 3.500h6M1.500 4v2.500h3V4M3 6.500V12" /></Svg></Task>
        <Task $w={24}><Svg w={13} h={13} c="#c9ccd0" sw={1.200}><path d="M1 11.500Q1.500 2 12 1M4 12Q4.500 5 12 4.200M7 12Q7.500 8 12 7.500" /><circle cx="11" cy="11" r="1.500" fill="#fff" stroke="none" /></Svg></Task>
        <Task $w={22}><Svg w={17} h={14} c="#fff"><path d="M1 4.500h3L7.500 1v12L4 9.500H1z" /><path d="M9.500 4.500q1.500 2.500 0 5" /><path d="M11.500 2.500q3 4.500 0 9M14 1q4 6 0 12" stroke="#8c9096" /></Svg></Task>
        <Task $w={34}><Svg w={23} h={13} c="#fff"><path d="M.500 .500h22v12H.500z" /><path d="M3 3.500h17M3 6.500h17" strokeDasharray="1.500 1" strokeWidth="1.300" /><path d="M5.500 9.500h12" /></Svg></Task>
        <Clock>12:24 PM<br />12/13/2021</Clock>
        <Notify>
          <svg width="26" height="26" viewBox="0 0 26 26"><path fill="#fff" d="M1 3h16v12H9v4l-4-4H1z" /><path d="M4 6.500h10M4 9h10M4 11.500h7" stroke="#2a2c33" /><circle cx="16.500" cy="18" r="7.500" fill="#2a2c33" stroke="#b5b7ba" /><text x="16.500" y="22.500" fontSize="12" textAnchor="middle" fill="#fff">1</text></svg>
        </Notify>
        <DesktopEdge />
      </Taskbar>
    </Screen>
  );
}
